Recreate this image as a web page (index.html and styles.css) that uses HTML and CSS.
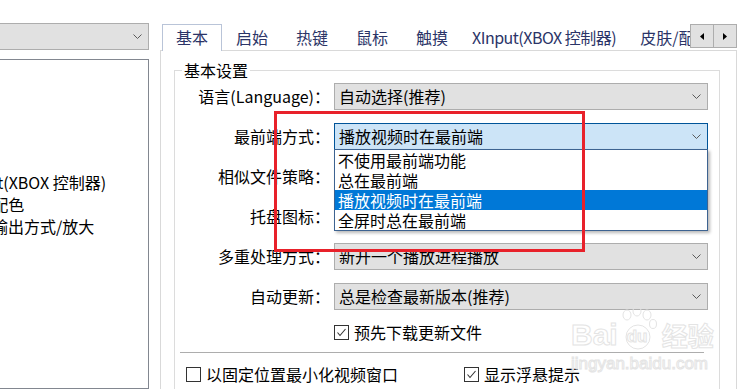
FILE: index.html
```html
<!DOCTYPE html>
<html lang="zh-CN">
<head>
    <meta charset="UTF-8">
    <title>选项 - 基本</title>
    <link rel="stylesheet" href="styles.css">
</head>
<body>
<div class="window">
    <aside class="side">
        <div class="combo side-combo">
            <span class="combo-text"></span>
            <svg class="chev" width="9" height="5" viewBox="0 0 9 5"><polyline points="0.5,0.5 4.5,4.5 8.5,0.5"/></svg>
        </div>
        <div class="tree">
            <ul class="tree-list">
                <li>基本</li>
                <li>启始</li>
                <li>热键</li>
                <li>鼠标</li>
                <li>触摸</li>
                <li>XInput(XBOX 控制器)</li>
                <li>皮肤/配色</li>
                <li class="tree-sub">输出方式/放大</li>
            </ul>
        </div>
    </aside>

    <section class="tabs">
        <div class="tab-strip">
            <div class="tab-list">
                <span class="tab active">基本</span>
                <span class="tab">启始</span>
                <span class="tab">热键</span>
                <span class="tab">鼠标</span>
                <span class="tab">触摸</span>
                <span class="tab tab-latin">XInput(XBOX 控制器)</span>
                <span class="tab">皮肤/配色</span>
            </div>
            <div class="tab-scroll">
                <button class="scroll-btn"><svg width="4" height="7" viewBox="0 0 4 7"><polygon points="4,0 4,7 0,3.5"/></svg></button>
                <button class="scroll-btn"><svg width="4" height="7" viewBox="0 0 4 7"><polygon points="0,0 0,7 4,3.5"/></svg></button>
            </div>
        </div>

        <div class="panel">
            <fieldset class="group">
                <legend>基本设置</legend>
                <div class="form">
                    <span class="label">语言(Language)：</span>
                    <div class="combo">
                        <span class="combo-text">自动选择(推荐)</span>
                        <svg class="chev" width="9" height="5" viewBox="0 0 9 5"><polyline points="0.5,0.5 4.5,4.5 8.5,0.5"/></svg>
                    </div>

                    <span class="label">最前端方式：</span>
                    <div class="combo open">
                        <span class="combo-text">播放视频时在最前端</span>
                        <svg class="chev" width="9" height="5" viewBox="0 0 9 5"><polyline points="0.5,0.5 4.5,4.5 8.5,0.5"/></svg>
                        <ul class="dropdown">
                            <li>不使用最前端功能</li>
                            <li>总在最前端</li>
                            <li class="sel">播放视频时在最前端</li>
                            <li>全屏时总在最前端</li>
                        </ul>
                    </div>

                    <span class="label">相似文件策略：</span>
                    <div class="combo">
                        <svg class="chev" width="9" height="5" viewBox="0 0 9 5"><polyline points="0.5,0.5 4.5,4.5 8.5,0.5"/></svg>
                    </div>

                    <span class="label">托盘图标：</span>
                    <div class="combo">
                        <svg class="chev" width="9" height="5" viewBox="0 0 9 5"><polyline points="0.5,0.5 4.5,4.5 8.5,0.5"/></svg>
                    </div>

                    <span class="label">多重处理方式：</span>
                    <div class="combo">
                        <span class="combo-text">新开一个播放进程播放</span>
                        <svg class="chev" width="9" height="5" viewBox="0 0 9 5"><polyline points="0.5,0.5 4.5,4.5 8.5,0.5"/></svg>
                    </div>

                    <span class="label">自动更新：</span>
                    <div class="combo">
                        <span class="combo-text">总是检查最新版本(推荐)</span>
                        <svg class="chev" width="9" height="5" viewBox="0 0 9 5"><polyline points="0.5,0.5 4.5,4.5 8.5,0.5"/></svg>
                    </div>

                    <label class="check check-row">
                        <span class="box"><svg width="13" height="13" viewBox="0 0 13 13"><polyline points="2.5,6.5 5,9.5 10.5,3"/></svg></span>
                        预先下载更新文件
                    </label>
                </div>

                <div class="group-sep"></div>

                <div class="opts">
                    <label class="check">
                        <span class="box"></span>
                        以固定位置最小化视频窗口
                    </label>
                    <label class="check">
                        <span class="box"><svg width="13" height="13" viewBox="0 0 13 13"><polyline points="2.5,6.5 5,9.5 10.5,3"/></svg></span>
                        显示浮悬提示
                    </label>
                </div>
            </fieldset>
        </div>
    </section>

    <div class="annot"></div>

    <div class="watermark">
        <div class="wm-top">
            <span class="wm-bai">Bai</span>
            <span class="wm-paw">
                <svg width="40" height="46" viewBox="0 0 40 46">
                    <ellipse cx="9" cy="9" rx="4" ry="5"/>
                    <ellipse cx="19" cy="5" rx="4" ry="5"/>
                    <ellipse cx="29" cy="9" rx="4" ry="5"/>
                    <ellipse cx="35" cy="18" rx="3.5" ry="4.5"/>
                    <circle cx="20" cy="31" r="12"/>
                </svg>
                <span class="wm-du">du</span>
            </span>
            <span class="wm-jy">经验</span>
        </div>
        <div class="wm-url">jingyan.baidu.com</div>
    </div>
</div>
</body>
</html>
```

FILE: styles.css
```css
body {
    margin: 0;
    background-color: #ffffff;
    font-family: "Noto Sans CJK SC", "Noto Sans", sans-serif;
    font-size: 16px;
    color: #000000;
    overflow: hidden;
}
ul {
    list-style: none;
    margin: 0;
    padding: 0;
}
.window {
    position: relative;
    width: 745px;
    height: 389px;
    display: flex;
    gap: 11px;
    padding-top: 23px;
    box-sizing: border-box;
    overflow: hidden;
}

/* left pane */
.side {
    width: 149px;
    flex: none;
    display: flex;
    flex-direction: column;
    gap: 9px;
}
.combo {
    position: relative;
    height: 27px;
    box-sizing: border-box;
    border: 1px solid #adadad;
    background-color: #e1e1e1;
    display: flex;
    align-items: center;
    justify-content: space-between;
    padding: 0 6px 0 4px;
}
.combo-text {
    line-height: 25px;
    white-space: nowrap;
}
.chev {
    flex: none;
    margin-left: auto;
    fill: none;
    stroke: #5a5a5a;
    stroke-width: 1;
}
.side-combo {
    height: 28px;
    margin-left: -2px;
}
.tree {
    height: 340px;
    margin-left: -10px;
    border: 1px solid #828790;
    background-color: #ffffff;
    overflow: hidden;
}
.tree-list {
    margin-left: -37px;
    padding-top: 1px;
}
.tree-list li {
    line-height: 22px;
    white-space: nowrap;
}
.tree-list .tree-sub {
    padding-left: 38px;
}

/* tabs */
.tabs {
    width: 577px;
    flex: none;
    display: flex;
    flex-direction: column;
}
.tab-strip {
    display: flex;
    height: 28px;
    box-sizing: border-box;
    padding-top: 1px;
    margin-bottom: -1px;
    position: relative;
    z-index: 1;
}
.tab-list {
    flex: 1;
    min-width: 0;
    display: flex;
    padding-left: 2px;
    overflow: hidden;
}
.tab {
    flex: none;
    height: 27px;
    box-sizing: border-box;
    padding: 0 14px;
    line-height: 24px;
    border: 1px solid transparent;
    border-bottom: 0;
    white-space: nowrap;
    color: #2b3467;
}
.tab.active {
    padding: 0 13px;
    border-color: #b9c4d8;
    background-color: #ffffff;
}
.tab:not(.active) {
    border-width: 0;
    padding-top: 1px;
}
.tab-latin {
    padding: 1px 10px 0;
    letter-spacing: -0.5px;
}
.tab-scroll {
    display: flex;
    flex: none;
    align-self: flex-start;
}
.scroll-btn {
    width: 24px;
    height: 24px;
    margin: 0;
    padding: 0;
    border: 1px solid #adadad;
    background-color: #e1e1e1;
    display: flex;
    align-items: center;
    justify-content: center;
}
.scroll-btn + .scroll-btn {
    margin-left: -1px;
}
.scroll-btn svg {
    fill: #000000;
}
.panel {
    height: 400px;
    flex: none;
    border: 1px solid #d9d9d9;
    padding: 9px 16px 0 13px;
}

/* group box */
.group {
    margin: 0;
    padding: 0 11px 0 0;
    border: 1px solid #dcdcdc;
    min-width: 0;
    height: 380px;
}
.group legend {
    margin-left: 7px;
    padding: 0 2px;
    line-height: 20px;
}
.form {
    display: grid;
    grid-template-columns: 155px 374px;
    grid-template-rows: repeat(6, 27px) auto;
    column-gap: 4px;
    row-gap: 13px;
    padding-top: 3px;
}
.label {
    text-align: right;
    line-height: 27px;
    white-space: nowrap;
}
.combo.open {
    z-index: 2;
    background-color: #cce4f7;
    border-color: #005499;
}
.dropdown {
    position: absolute;
    top: 100%;
    left: -1px;
    right: -1px;
    background-color: #ffffff;
    border: 1px solid #3d6391;
    box-shadow: 2px 2px 3px rgba(0, 0, 0, 0.28);
}
.dropdown li {
    height: 20px;
    line-height: 20px;
    padding-left: 3px;
    white-space: nowrap;
}
.dropdown .sel {
    background-color: #0078d7;
    color: #ffffff;
}
.check {
    display: flex;
    align-items: center;
    gap: 5px;
    height: 20px;
    line-height: 20px;
    white-space: nowrap;
}
.check-row {
    grid-column: 2;
    margin-top: -1px;
}
.box {
    width: 15px;
    height: 15px;
    box-sizing: border-box;
    border: 1px solid #333333;
    background-color: #ffffff;
    display: flex;
}
.box svg {
    fill: none;
    stroke: #333333;
    stroke-width: 1.1;
}
.group-sep {
    height: 1px;
    background-color: #adadad;
    margin: 10px 4px 0 5px;
}
.opts {
    display: grid;
    grid-template-columns: 278px auto;
    padding-left: 11px;
    margin-top: 11px;
}

/* annotation + watermark */
.annot {
    position: absolute;
    left: 274px;
    top: 111px;
    width: 311px;
    height: 141px;
    box-sizing: border-box;
    border: 3px solid #e8212a;
    z-index: 5;
}
.watermark {
    position: absolute;
    left: 571px;
    top: 306px;
    z-index: 4;
    color: rgba(255, 255, 255, 0.6);
    -webkit-text-stroke: 1px #e4e4e4;
    font-family: "Liberation Sans", "Noto Sans CJK SC", sans-serif;
}
.wm-top {
    display: flex;
    align-items: flex-end;
}
.wm-bai {
    font-size: 30px;
    font-weight: bold;
    line-height: 34px;
}
.wm-paw {
    position: relative;
    width: 40px;
    height: 46px;
}
.wm-paw svg {
    fill: none;
    stroke: #e4e4e4;
    stroke-width: 1;
}
.wm-du {
    position: absolute;
    left: 9px;
    top: 20px;
    font-size: 17px;
    font-weight: bold;
    line-height: 22px;
}
.wm-jy {
    font-family: "Noto Sans CJK SC", sans-serif;
    font-size: 26px;
    font-weight: bold;
    line-height: 34px;
    margin-left: 4px;
}
.wm-url {
    font-size: 17px;
    line-height: 20px;
    margin-top: 2px;
}
```
